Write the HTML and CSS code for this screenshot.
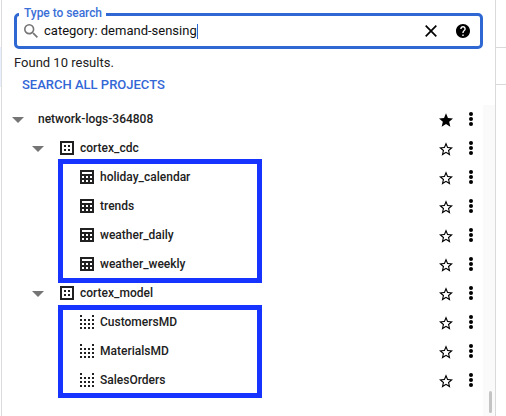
FILE: index.html
```html
<!DOCTYPE html>
<html lang="en">
<head>
<meta charset="utf-8">
<title>Explorer</title>
<link rel="stylesheet" href="styles.css">
</head>
<body>
<svg class="defs" width="0" height="0" aria-hidden="true">
  <symbol id="arrow" viewBox="0 0 12 6"><path d="M0 0h12L6 6z" fill="#757575"/></symbol>
  <symbol id="dataset" viewBox="0 0 14 14"><path d="M1 1h12v12H1z" fill="none" stroke="#212121" stroke-width="2"/><path d="M4 4h2v2H4zM8 4h2v2H8zM4 8h2v2H4zM8 8h2v2H8z" fill="#212121"/></symbol>
  <symbol id="table" viewBox="0 0 14 14"><path fill="#212121" fill-rule="evenodd" d="M0 0h14v14H0zM2 2v2h10V2zM2 6v2h2V6zM6 6v2h2V6zM10 6v2h2V6zM2 10v2h2v-2zM6 10v2h2v-2zM10 10v2h2v-2z"/></symbol>
  <symbol id="view" viewBox="0 0 14 14"><path fill="none" stroke="#212121" stroke-width="2" stroke-dasharray="2 2" d="M1 0v14M13 0v14"/><path fill="none" stroke="#212121" stroke-width="2" stroke-dasharray="2 2" d="M4 5h6M4 9h6M4 13h6"/></symbol>
  <symbol id="star" viewBox="2 2 20 19"><path d="M22 9.24l-7.19-.62L12 2 9.19 8.63 2 9.24l5.46 4.73L5.82 21 12 17.27 18.18 21l-1.63-7.03L22 9.24zM12 15.4l-3.76 2.27 1-4.28-3.32-2.88 4.38-.38L12 6.1l1.71 4.04 4.38.38-3.32 2.88 1 4.28L12 15.4z"/></symbol>
  <symbol id="star-full" viewBox="2 2 20 19"><path d="M12 17.27L18.18 21l-1.64-7.03L22 9.24l-7.19-.61L12 2 9.19 8.63 2 9.24l5.46 4.73L5.82 21z"/></symbol>
  <symbol id="more" viewBox="0 0 4 14"><circle cx="2" cy="2" r="2"/><circle cx="2" cy="7" r="2"/><circle cx="2" cy="12" r="2"/></symbol>
</svg>
<div class="app">
  <div class="rail"><div class="rail-item"></div></div>
  <main class="panel">
    <div class="search">
      <span class="search-label">Type to search</span>
      <svg class="search-icon" viewBox="3 3 17.5 17.5"><path fill="#757575" d="M15.5 14h-.79l-.28-.27A6.47 6.47 0 0 0 16 9.5 6.5 6.5 0 1 0 9.5 16c1.61 0 3.09-.59 4.23-1.57l.27.28v.79l5 4.99L20.49 19l-4.99-5zm-6 0C7.01 14 5 11.99 5 9.5S7.01 5 9.5 5 14 7.01 14 9.5 11.99 14 9.5 14z"/></svg>
      <span class="query">category: demand-sensing</span><span class="caret"></span>
      <svg class="close" viewBox="0 0 12 12"><path d="M.7.7l10.6 10.6M11.3.7L.7 11.3" fill="none" stroke="#000" stroke-width="1.7"/></svg>
      <svg class="help" viewBox="2 2 20 20"><path d="M12 2C6.48 2 2 6.48 2 12s4.48 10 10 10 10-4.48 10-10S17.52 2 12 2zm1 17h-2v-2h2v2zm2.07-7.75l-.9.92C13.45 12.9 13 13.5 13 15h-2v-.5c0-1.1.45-2.1 1.17-2.83l1.24-1.26c.37-.36.59-.86.59-1.41 0-1.1-.9-2-2-2s-2 .9-2 2H8c0-2.21 1.79-4 4-4s4 1.79 4 4c0 .88-.36 1.68-.93 2.25z"/></svg>
    </div>
    <div class="found">Found 10 results.</div>
    <div class="all">SEARCH ALL PROJECTS</div>
    <div class="results">
      <div class="tree">
        <div class="row project"><svg class="arrow"><use href="#arrow"/></svg><span class="name">network-logs-364808</span><svg class="star"><use href="#star-full"/></svg><svg class="more"><use href="#more"/></svg></div>
        <div class="row dataset"><svg class="arrow"><use href="#arrow"/></svg><svg class="kind"><use href="#dataset"/></svg><span class="name">cortex_cdc</span><svg class="star"><use href="#star"/></svg><svg class="more"><use href="#more"/></svg></div>
        <div class="group tables">
          <div class="row item"><svg class="kind"><use href="#table"/></svg><span class="name">holiday_calendar</span><svg class="star"><use href="#star"/></svg><svg class="more"><use href="#more"/></svg></div>
          <div class="row item"><svg class="kind"><use href="#table"/></svg><span class="name">trends</span><svg class="star"><use href="#star"/></svg><svg class="more"><use href="#more"/></svg></div>
          <div class="row item"><svg class="kind"><use href="#table"/></svg><span class="name">weather_daily</span><svg class="star"><use href="#star"/></svg><svg class="more"><use href="#more"/></svg></div>
          <div class="row item"><svg class="kind"><use href="#table"/></svg><span class="name">weather_weekly</span><svg class="star"><use href="#star"/></svg><svg class="more"><use href="#more"/></svg></div>
        </div>
        <div class="row dataset"><svg class="arrow"><use href="#arrow"/></svg><svg class="kind"><use href="#dataset"/></svg><span class="name">cortex_model</span><svg class="star"><use href="#star"/></svg><svg class="more"><use href="#more"/></svg></div>
        <div class="group views">
          <div class="row item"><svg class="kind"><use href="#view"/></svg><span class="name">CustomersMD</span><svg class="star"><use href="#star"/></svg><svg class="more"><use href="#more"/></svg></div>
          <div class="row item"><svg class="kind"><use href="#view"/></svg><span class="name">MaterialsMD</span><svg class="star"><use href="#star"/></svg><svg class="more"><use href="#more"/></svg></div>
          <div class="row item"><svg class="kind"><use href="#view"/></svg><span class="name">SalesOrders</span><svg class="star"><use href="#star"/></svg><svg class="more"><use href="#more"/></svg></div>
        </div>
      </div>
      <div class="scrollbar"><div class="thumb"></div></div>
    </div>
  </main>
  <aside class="side"><div class="side-head"></div><div class="side-bar"></div></aside>
</div>
</body>
</html>
```
FILE: styles.css
```css
*, *::after { box-sizing: border-box; }
body { margin: 0; background: #fff; font-family: Roboto, "Liberation Sans", sans-serif; color: #212121; overflow: hidden; }
svg { display: block; flex: none; }
.defs { position: absolute; }
.app { display: flex; width: 506px; height: 416px; }
.rail { width: 2px; border-right: 1px solid #dcdcde; padding-top: 47px; }
.rail-item { height: 40px; background: #e8f0fe; }
.panel { width: 493px; display: flex; flex-direction: column; }
.side { width: 11px; border-left: 1px solid #dadada; }
.side-head { height: 48px; border-bottom: 1px solid #dadada; }
.side-bar { height: 37px; border-bottom: 1px solid #dadada; }

.search { position: relative; display: flex; align-items: center; flex: none; width: 469px; height: 36px; margin: 13px 0 0 12px; border: 3px solid #3068d3; border-radius: 5px; padding: 0 10px 0 7px; }
.search-label { position: absolute; left: 2px; top: -10px; padding: 0 4px 0 5px; width: 87px; line-height: 14px; background: #fff; color: #3b6fd8; font-size: 12px; font-weight: 500; letter-spacing: -0.05px; white-space: nowrap; }
.search-icon { width: 14px; height: 14px; }
.query { margin-left: 6px; font-size: 13px; line-height: 18px; color: #111; white-space: nowrap; }
.caret { width: 1px; height: 15px; background: #3068d3; }
.close { width: 12px; height: 12px; margin-left: auto; }
.help { width: 14px; height: 14px; margin-left: 19px; }

.found { margin: 5px 0 0 12px; font-size: 13px; line-height: 18px; color: #212121; }
.all { margin: 3px 0 0 20px; height: 30px; font-size: 13px; line-height: 19px; font-weight: 500; color: #3367d6; }

.results { display: flex; flex: 1; }
.tree { width: 481px; }
.scrollbar { flex: 1; background: #fafafa; padding: 286px 0 0 6px; }
.thumb { width: 3px; height: 22px; border-radius: 2px; background: #c4c4c4; }
.row { display: flex; align-items: center; height: 29px; padding: 0 10px 1px 0; }
.project { padding-left: 10px; }
.dataset { padding-left: 30px; }
.item { padding-left: 78px; }
.arrow { width: 12px; height: 6px; margin-top: 1px; }
.kind { width: 14px; height: 14px; }
.arrow + .kind { margin-left: 16px; }
.name { margin-left: 6px; font-size: 12px; line-height: 16px; font-weight: 500; white-space: nowrap; }
.arrow + .name { margin-left: 14px; }
.star { width: 14px; height: 14px; margin: 2px 0 0 auto; }
.more { width: 4px; height: 14px; margin-left: 16px; }
.group { position: relative; }
.group::after { content: ""; position: absolute; left: 56px; width: 204px; top: -4px; bottom: -4px; border: 5px solid #1733ff; }
.views::after { top: -3px; bottom: -3px; }
```
